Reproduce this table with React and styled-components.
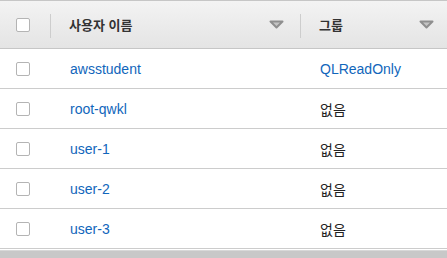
import React from 'react';
import styled, { createGlobalStyle } from 'styled-components';

const GlobalStyle = createGlobalStyle`
	html, body {
		margin: 0;
		padding: 0;
		background: #fff;
		overflow: hidden;
	}
	body {
		font-family: 'Liberation Sans', Arial, 'Noto Sans CJK KR', sans-serif;
	}
`;

const cols = '50px 250px 150px';

const Table = styled.div`
	width: 450px;
	display: flex;
	flex-direction: column;
`;

const HeaderRow = styled.div`
	display: grid;
	grid-template-columns: ${cols};
	height: 47px;
	border-top: 1px solid #c6c6c6;
	border-bottom: 1px solid #c6c6c6;
	background: linear-gradient(#f3f3f3, #e4e4e4);
`;

const Row = styled.div`
	display: grid;
	grid-template-columns: ${cols};
	height: 39px;
	border-bottom: 1px solid #cccccc;
	background: #fff;
`;

const CheckCell = styled.div`
	display: flex;
	align-items: center;
	padding-left: 16px;
`;

const Box = styled.span`
	width: 12px;
	height: 12px;
	border: 1px solid #b4b4b4;
	border-radius: 2px;
	background: #fff;
	box-sizing: content-box;
`;

const HeadCell = styled.div`
	position: relative;
	display: flex;
	align-items: center;
	justify-content: space-between;
	padding: 0 16px 0 19px;
	font-size: 13px;
	font-weight: bold;
	color: #333;
	font-family: 'Liberation Sans', Arial, 'Noto Sans CJK KR', sans-serif;

	&::before {
		content: '';
		position: absolute;
		left: 0;
		top: 13px;
		width: 1px;
		height: 24px;
		background: #cdcdcd;
	}
`;

const Cell = styled.div`
	display: flex;
	align-items: center;
	padding-left: 20px;
	font-size: 14px;
	color: ${(p) => (p.link ? '#1166bb' : '#222')};
	font-family: 'Liberation Sans', Arial, 'Noto Sans CJK KR', sans-serif;
`;

const Footer = styled.div`
	margin-top: 1px;
	height: 8px;
	background: #c8c8c8;
	border-top: 1px solid #d8d8d8;
`;

const SortArrow = () => (
	<svg width="15" height="9" viewBox="0 0 15 9">
		<polygon
			points="1.5,1.5 13.5,1.5 7.5,7.5"
			fill="#c4c4c4"
			stroke="#8f8f8f"
			strokeWidth="2"
			strokeLinejoin="round"
		/>
	</svg>
);

const users = [
	{ name: 'awsstudent', group: 'QLReadOnly', linked: true },
	{ name: 'root-qwkl', group: '없음' },
	{ name: 'user-1', group: '없음' },
	{ name: 'user-2', group: '없음' },
	{ name: 'user-3', group: '없음' },
];

const App = () => (
	<>
		<GlobalStyle />
		<Table>
			<HeaderRow>
				<CheckCell>
					<Box />
				</CheckCell>
				<HeadCell>
					사용자 이름
					<SortArrow />
				</HeadCell>
				<HeadCell>
					그룹
					<SortArrow />
				</HeadCell>
			</HeaderRow>
			{users.map((u) => (
				<Row key={u.name}>
					<CheckCell>
						<Box />
					</CheckCell>
					<Cell link>{u.name}</Cell>
					<Cell link={u.linked}>{u.group}</Cell>
				</Row>
			))}
			<Footer />
		</Table>
	</>
);

export default App;
